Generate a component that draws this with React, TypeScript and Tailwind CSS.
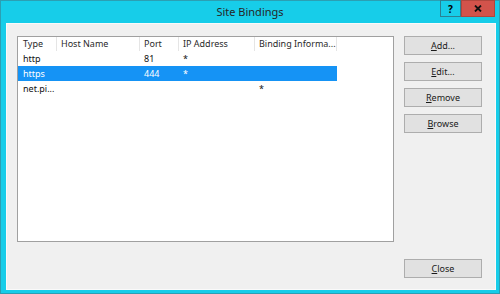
import React from 'react';

type Row = { type: string; host: string; port: string; ip: string; info: string; selected?: boolean };

const rows: Row[] = [
    { type: 'http', host: '', port: '81', ip: '*', info: '' },
    { type: 'https', host: '', port: '444', ip: '*', info: '', selected: true },
    { type: 'net.pi...', host: '', port: '', ip: '', info: '*' },
];

const DialogButton: React.FC<{ mnemonic: string; rest: string }> = ({ mnemonic, rest }) => (
    <button className="h-[19px] w-full border border-[#adadad] bg-[#e1e1e1] text-[9px] leading-none text-[#1a1a1a]">
        <span className="underline underline-offset-1">{mnemonic}</span>
        {rest}
    </button>
);

const App: React.FC = () => {
    return (
        <div
            className="flex h-[294px] w-[500px] flex-col border border-[#2b9fb3] bg-[#17cde9]"
            style={{ fontFamily: '"Noto Sans", "Open Sans", sans-serif' }}
        >
            {/* title bar */}
            <div className="relative flex h-[22px] shrink-0 items-center justify-center">
                <span className="text-[11px] text-[#262626]">Site Bindings</span>
                <div className="absolute right-[4px] top-[-1px] flex">
                    <div className="flex h-[17px] w-[21px] items-center justify-center border border-[#2c8193] bg-[#17cde9] text-[10px] font-bold leading-none text-black">
                        ?
                    </div>
                    <div className="flex h-[17px] w-[34px] items-center justify-center border border-[#b0463d] bg-[#d2534b]">
                        <svg width="8" height="7" viewBox="0 0 8 7">
                            <path d="M1 0.5 L7 6.5 M7 0.5 L1 6.5" stroke="#111" strokeWidth="1.8" />
                        </svg>
                    </div>
                </div>
            </div>

            {/* body */}
            <div className="mb-[3px] ml-[5px] mr-[3px] flex flex-1 flex-col border border-[#fafafa] bg-[#f0f0f0] pb-[11px] pl-[10px] pr-[13px] pt-[12px]">
                <div className="flex flex-1 gap-[10px]">
                    <div className="flex-1 border border-[#a0a0a0] bg-white text-[9px] text-[#111]">
                        <div className="flex h-[14px] items-center text-[#2a2a2a]">
                            <div className="h-full w-[39px] border-r border-[#e5e5e5] pl-[5px] leading-[14px]">Type</div>
                            <div className="h-full w-[83px] border-r border-[#e5e5e5] pl-[4px] leading-[14px]">Host Name</div>
                            <div className="h-full w-[39px] border-r border-[#e5e5e5] pl-[4px] leading-[14px]">Port</div>
                            <div className="h-full w-[76px] border-r border-[#e5e5e5] pl-[4px] leading-[14px]">IP Address</div>
                            <div className="h-full w-[82px] border-r border-[#e5e5e5] pl-[4px] leading-[14px]">Binding Informa...</div>
                        </div>
                        {rows.map((r) => (
                            <div
                                key={r.type}
                                className={
                                    r.selected
                                        ? 'flex h-[15px] w-[319px] items-center bg-[#1593f5] text-white'
                                        : 'flex h-[15px] w-[319px] items-center'
                                }
                            >
                                <div className="w-[39px] pl-[5px]">{r.type}</div>
                                <div className="w-[83px] pl-[4px]">{r.host}</div>
                                <div className="w-[39px] pl-[4px]">{r.port}</div>
                                <div className="w-[76px] pl-[4px]">{r.ip}</div>
                                <div className="w-[82px] pl-[4px]">{r.info}</div>
                            </div>
                        ))}
                    </div>
                    <div className="flex w-[78px] flex-col gap-[7px]">
                        <DialogButton mnemonic="A" rest="dd..." />
                        <DialogButton mnemonic="E" rest="dit..." />
                        <DialogButton mnemonic="R" rest="emove" />
                        <DialogButton mnemonic="B" rest="rowse" />
                    </div>
                </div>
                <div className="mt-[12px] flex justify-end">
                    <div className="w-[78px]">
                        <DialogButton mnemonic="C" rest="lose" />
                    </div>
                </div>
            </div>
        </div>
    );
};

export default App;
